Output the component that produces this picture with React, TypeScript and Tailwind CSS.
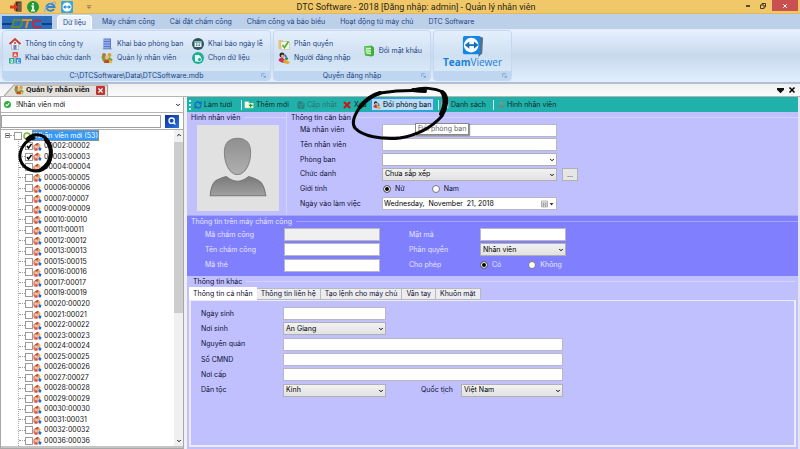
import { useState } from "react"
import type { ReactNode } from "react"
import { ChevronDown, ChevronUp, Search, RefreshCw, Save, X } from "lucide-react"

const employees = [
  "00002", "00003", "00004", "00005", "00006", "00007", "00009", "00010", "00011", "00012",
  "00013", "00015", "00016", "00017", "00019", "00020", "00021", "00022", "00023", "00024",
  "00025", "00026", "00027", "00028", "00029", "00030", "00031", "00032", "00036",
]

const menus = ["Máy chấm công", "Cài đặt chấm công", "Chấm công và báo biểu", "Hoạt động từ máy chủ", "DTC Software"]

const tabs = ["Thông tin cá nhân", "Thông tin liên hệ", "Tạo lệnh cho máy chủ", "Vân tay", "Khuôn mặt"]

/* ---------- icons ---------- */

function PeopleIcon({ className = "size-3" }: { className?: string }) {
  return (
    <svg viewBox="0 0 24 24" className={`shrink-0 ${className}`}>
      <path d="M1 11c0-4 3-6 6-5l4 6-2 9-5-2z" fill="#8a9a3a" />
      <circle cx="6" cy="6" r="4" fill="#b07a3c" />
      <circle cx="17" cy="6" r="4" fill="#d8a23a" />
      <path d="M12 12l5-2 6 5-2 7-7-1z" fill="#6fa33c" />
      <circle cx="12" cy="11" r="4" fill="#e8b98a" />
      <path d="M6 22c0-5 3-7 6-7s5 3 5 7z" fill="#c8452c" />
      <path d="M17 15l6 4-3 4-4-2z" fill="#e3c23c" />
    </svg>
  )
}

function StaffIcon() {
  return (
    <svg viewBox="0 0 24 24" className="size-[9px] shrink-0">
      <path d="M1 9l8-5 4 2-1 16-8 1-3-5z" fill="#e07a5c" />
      <circle cx="8" cy="12" r="4" fill="#f4c4a8" />
      <path d="M5 7l7-5 5 3-3 5-6-1z" fill="#b4503a" />
      <circle cx="16" cy="9" r="4" fill="#eeaa62" />
      <path d="M14 15l4-2 5 4-3 6-5-1z" fill="#2f66c4" />
      <path d="M6 19l5-2 2 5-6 1z" fill="#e2472d" />
    </svg>
  )
}

function HouseIcon() {
  return (
    <svg viewBox="0 0 24 24" className="size-3 shrink-0">
      <path d="M5 11v12h14V11l-7-7z" fill="#e6ecf8" stroke="#8c9bc0" />
      <path d="M1 12L12 2l11 10" fill="none" stroke="#cf3a2c" strokeWidth="3.5" />
      <path d="M9 14h6v9H9z" fill="#6f83b8" />
      <circle cx="12" cy="10" r="2" fill="#cf3a2c" />
    </svg>
  )
}

function BlocksIcon() {
  return (
    <svg viewBox="0 0 24 24" className="size-3 shrink-0">
      <rect x="7" y="0" width="11" height="11" rx="1" fill="#e0564c" />
      <rect x="0" y="12" width="11" height="11" rx="1" fill="#2fae8c" />
      <rect x="13" y="12" width="11" height="11" rx="1" fill="#3d8fd6" />
      <path d="M10 9l2.500-6 2.500 6M11 7h3M4 15v6h3v-6zM21 16h-4v5h4" fill="none" stroke="#fff" strokeWidth="1.500" />
    </svg>
  )
}

function BuildingIcon() {
  return (
    <svg viewBox="0 0 24 24" className="size-3 shrink-0">
      <path d="M5 1h15v21H5z" fill="#5b78d0" />
      <path d="M8 3v17M12 3v17M16 3v17" stroke="#cfdcfb" strokeWidth="2" strokeDasharray="3 2" />
      <path d="M3 22h19" stroke="#8fa0d0" strokeWidth="2" />
    </svg>
  )
}

function CalendarIcon() {
  return (
    <svg viewBox="0 0 24 24" className="size-3 shrink-0">
      <circle cx="12" cy="12" r="12" fill="#2f5260" />
      <rect x="5" y="6" width="14" height="12" rx="1" fill="#e7f0ef" />
      <path d="M5 8h14" stroke="#5fa8a0" strokeWidth="3" />
      <path d="M8 12h8M8 15h8" stroke="#2f5260" strokeWidth="1.500" strokeDasharray="2 1" />
    </svg>
  )
}

function DataIcon() {
  return (
    <svg viewBox="0 0 24 24" className="size-3 shrink-0">
      <circle cx="12" cy="12" r="12" fill="#1fb093" />
      <path d="M6 6h8l4 4v3l-5 6H6z" fill="#f4fbf9" />
      <circle cx="15" cy="15" r="4" fill="#1fb093" stroke="#fff" strokeWidth="1.500" />
    </svg>
  )
}

function PermissionIcon() {
  return (
    <svg viewBox="0 0 24 24" className="size-3 shrink-0">
      <path d="M1 4h8l2 3h11v15H1z" fill="#e3c47a" />
      <path d="M6 7h17v16H6z" fill="#f6f4ea" stroke="#b9b48f" />
      <path d="M9 14l4 5 8-12" fill="none" stroke="#53b234" strokeWidth="3.500" />
    </svg>
  )
}

function UserIcon({ className = "size-3" }: { className?: string }) {
  return (
    <svg viewBox="0 0 24 24" className={`shrink-0 ${className}`}>
      <circle cx="8" cy="6" r="5" fill="#2a2330" />
      <circle cx="9" cy="8" r="3" fill="#e9b48c" />
      <path d="M1 17c1-5 5-6 9-5l4 4-3 6-6-2z" fill="#c8325a" />
      <circle cx="17" cy="13" r="3" fill="#3a8a3c" />
      <path d="M11 16l5 0 8 5-4 3-9-2z" fill="#e3a52c" />
      <path d="M14 4l4 5-4 2z" fill="#4a60c8" />
    </svg>
  )
}

function PasswordIcon() {
  return (
    <svg viewBox="0 0 24 24" className="size-3 shrink-0">
      <path d="M2 3l15-2 5 4v16l-5 2-13-2z" fill="#3fae3c" />
      <path d="M3 4l13-1v17l-11-2z" fill="#6fd062" />
      <path d="M6 8l10-1M6 12l10 0M7 16l9 1" stroke="#fff" strokeWidth="2" />
    </svg>
  )
}

function TeamViewerIcon({ className }: { className: string }) {
  return (
    <svg viewBox="0 0 24 24" className={className}>
      <path d="M18 1l5 2-1 17-4 4z" fill="#5f6b7c" />
      <rect x="1" y="1" width="19" height="20" rx="2" fill="#1486e6" />
      <circle cx="10" cy="11" r="8" fill="#fff" />
      <path d="M3 11l5-4v3h5V7l5 4-5 4v-3H8v3z" fill="#1270c4" />
    </svg>
  )
}

function Launcher() {
  return (
    <svg viewBox="0 0 8 8" className="absolute right-1 size-[5px]">
      <path d="M1 6V1h5M4 4l3 3M7 4v3H4" fill="none" stroke="#6d8fbd" />
    </svg>
  )
}

/* ---------- ribbon ---------- */

function RibbonButton({ icon, children }: { icon: ReactNode; children: string }) {
  return (
    <button className="flex h-[14px] items-center gap-1 whitespace-nowrap text-[#1d4484]">
      {icon}
      <span>{children}</span>
    </button>
  )
}

function RibbonGroup({ caption, className, children }: { caption?: string; className: string; children: ReactNode }) {
  return (
    <section className={`flex flex-col overflow-hidden rounded-sm border border-[#c3d8f0] bg-linear-to-b from-[#e4effc] via-[#cfe0f2] to-[#dcecfc] ${className}`}>
      <div className="flex flex-1 items-center">{children}</div>
      <div className="relative flex h-[9px] items-center justify-center bg-[#bfd6f0] text-[#1d4484]">
        {caption}
        <Launcher />
      </div>
    </section>
  )
}

function Header() {
  return (
    <header className="shrink-0 bg-[#bdd0ea]">
      <div className="relative flex h-[14px] items-center justify-center border-b border-[#dfb95c] bg-[#f0c869]">
        <div className="absolute left-2.5 flex items-center gap-[5px]">
          <svg viewBox="0 0 24 24" className="size-3">
            <path d="M11 1h12v20H11z" fill="#3a2a26" />
            <path d="M15 4l7-2v20l-7-2z" fill="#7c5a48" />
            <path d="M0 9h8V4l8 8-8 8v-5H0z" fill="#e03a1e" />
          </svg>
          <svg viewBox="0 0 24 24" className="size-3">
            <circle cx="12" cy="12" r="12" fill="#1f9a34" />
            <path d="M12 4v3M9 10h3v9M8 19h8" fill="none" stroke="#fff" strokeWidth="3.500" />
          </svg>
          <svg viewBox="0 0 24 24" className="size-3">
            <path d="M20 16a8 7 0 1 1 1-4H5" fill="none" stroke="#2f86d8" strokeWidth="4" />
            <path d="M2 22C-2 18 14 1 22 2c2 1 1 3 0 5" fill="none" stroke="#6fb0e8" strokeWidth="2" />
          </svg>
          <svg viewBox="0 0 24 24" className="size-3">
            <rect width="24" height="24" rx="2" fill="#32a8e8" />
            <circle cx="12" cy="12" r="9" fill="#fff" />
            <path d="M4 12l5-4v3h6V8l5 4-5 4v-3H9v3z" fill="#1c86d0" />
          </svg>
          <svg viewBox="0 0 8 8" className="ml-2 size-1.5">
            <path d="M1 2h6M2 4h4L4 6z" fill="#8c7c50" stroke="#8c7c50" />
          </svg>
        </div>
        <h1 className="ml-8 font-[Roboto,sans-serif] text-[9px] text-[#2c2614]">
          DTC Software - 2018 [Đăng nhập: admin] - Quản lý nhân viên
        </h1>
        <div className="absolute top-0 right-0.5 flex h-[11px] items-center">
          <button aria-label="Thu nhỏ" className="mr-2.5 h-0.5 w-1 bg-[#5c4a20]" />
          <button aria-label="Khôi phục" className="mr-1.5">
            <svg viewBox="0 0 12 12" className="size-1.5">
              <path d="M1 4h7v7H1zM4 4V1h7v7H8" fill="none" stroke="#4a3c1c" strokeWidth="2" />
            </svg>
          </button>
          <button aria-label="Đóng" className="flex h-full w-[26px] items-center justify-center bg-[#c9504f] text-white">
            <X className="size-1.5" strokeWidth={4} />
          </button>
        </div>
      </div>

      <nav className="flex h-[15px] items-end pl-0.5 text-[#1d4484]">
        <svg viewBox="0 0 50 13" className="mr-[5px] h-[13px] w-[50px]">
          <rect width="50" height="13" fill="#2c6cb8" />
          <path d="M0 8h10M40 8h10" stroke="#0c3f86" strokeWidth="2" />
          <path d="M10 11l2-7h5q4 0 3 4t-5 3z" fill="none" stroke="#5c8c3c" strokeWidth="2" />
          <path d="M20 4h10M26 4l-2 8" stroke="#e09028" strokeWidth="2" />
          <path d="M39 5q-8-2-8 3t8 3" fill="none" stroke="#b83040" strokeWidth="2" />
        </svg>
        <button className="h-[14px] rounded-t-sm border border-b-0 border-white bg-[#e9f2fd] px-[5px]">Dữ liệu</button>
        <div className="ml-2.5 flex h-[14px] items-center gap-[15px] whitespace-nowrap">
          {menus.map((m) => (
            <button key={m}>{m}</button>
          ))}
        </div>
      </nav>

      <div className="flex h-[53px] gap-0.5 border-y border-[#dfeafa] bg-linear-to-b from-[#e7f1ff] via-[#c8d8ec] to-[#e0eefe] px-0.5">
        <RibbonGroup caption={"C:\\DTCSoftware\\Data\\DTCSoftware.mdb"} className="w-[269px]">
          <div className="grid grid-cols-[92px_91px_auto] pl-1.5">
            <RibbonButton icon={<HouseIcon />}>Thông tin công ty</RibbonButton>
            <RibbonButton icon={<BuildingIcon />}>Khai báo phòng ban</RibbonButton>
            <RibbonButton icon={<CalendarIcon />}>Khai báo ngày lễ</RibbonButton>
            <RibbonButton icon={<BlocksIcon />}>Khai báo chức danh</RibbonButton>
            <RibbonButton icon={<PeopleIcon />}>Quản lý nhân viên</RibbonButton>
            <RibbonButton icon={<DataIcon />}>Chọn dữ liệu</RibbonButton>
          </div>
        </RibbonGroup>
        <RibbonGroup caption="Quyền đăng nhập" className="w-[158px]">
          <div className="flex items-center gap-3 pl-1">
            <div>
              <RibbonButton icon={<PermissionIcon />}>Phân quyền</RibbonButton>
              <RibbonButton icon={<UserIcon />}>Người đăng nhập</RibbonButton>
            </div>
            <RibbonButton icon={<PasswordIcon />}>Đổi mật khẩu</RibbonButton>
          </div>
        </RibbonGroup>
        <RibbonGroup className="w-[79px]">
          <button className="flex w-full flex-col items-center text-[#1a80d8]">
            <TeamViewerIcon className="size-[22px]" />
            <span className="font-['Open_Sans',sans-serif] text-[10px]">
              <b>Team</b>Viewer
            </span>
          </button>
        </RibbonGroup>
      </div>
      <div className="h-0.5 bg-[#aebfd8]" />
    </header>
  )
}

function DocumentTabs() {
  return (
    <div className="flex h-[13px] shrink-0 items-end justify-between border-b border-[#b4b4b4] bg-linear-to-b from-[#f0f0f0] to-[#fbfbfb] pr-1">
      <div className="relative ml-1 flex h-3 items-center gap-0.5 pr-1 pl-2.5">
        <svg viewBox="0 0 104 12" preserveAspectRatio="none" className="absolute inset-0 size-full">
          <path d="M0 12L10 1h93v11" fill="#e3e0dc" stroke="#a09c98" />
        </svg>
        <PeopleIcon className="relative size-2.5" />
        <b className="relative font-[Roboto,sans-serif] text-[8px] whitespace-nowrap text-[#222]">Quản lý nhân viên</b>
        <button aria-label="Đóng thẻ" className="relative ml-1 flex size-[9px] items-center justify-center rounded-[1px] bg-[#c03434] text-white">
          <X className="size-[7px]" strokeWidth={4} />
        </button>
      </div>
      <div className="flex h-full items-center gap-1">
        <button aria-label="Danh sách thẻ">
          <svg viewBox="0 0 8 8" className="size-[7px]">
            <path d="M0 1h8v2L4 7 0 3z" fill="#111" />
          </svg>
        </button>
        <button aria-label="Đóng">
          <X className="size-2 text-black" strokeWidth={5} />
        </button>
      </div>
    </div>
  )
}

/* ---------- left tree ---------- */

function Tick({ label, defaultChecked = false }: { label: string; defaultChecked?: boolean }) {
  const [on, setOn] = useState(defaultChecked)
  return (
    <span className="relative flex size-2 shrink-0">
      <input
        type="checkbox"
        aria-label={label}
        checked={on}
        onChange={() => setOn(!on)}
        className="size-2 appearance-none border border-[#9a9a9a] bg-white"
      />
      {on && (
        <svg viewBox="0 0 8 8" className="pointer-events-none absolute inset-0 size-2">
          <path d="M2 4l1.500 2L6.500 2" fill="none" stroke="#000" strokeWidth="1.500" />
        </svg>
      )}
    </span>
  )
}

function Sidebar() {
  return (
    <aside className="flex w-[184px] shrink-0 flex-col border border-t-0 border-[#a8a8a8] bg-white text-[#111]">
      <div className="relative flex h-4 shrink-0 items-center border-b border-[#b4b4b4] pl-[3px]">
        <svg viewBox="0 0 16 16" className="size-[7px]">
          <circle cx="8" cy="8" r="8" fill="#2fae3c" />
          <path d="M4 8l3 3 5-6" fill="none" stroke="#fff" strokeWidth="2.500" />
        </svg>
        <select aria-label="Phòng ban" className="flex-1 appearance-none pl-[5px] outline-none">
          <option>!Nhân viên mới</option>
        </select>
        <ChevronDown className="pointer-events-none absolute right-0.5 size-1.5" strokeWidth={4} />
      </div>
      <div className="flex h-4 shrink-0 items-center gap-1 pr-1">
        <input aria-label="Tìm kiếm" className="h-[13px] min-w-0 flex-1 border border-[#a0a0a0] bg-white px-1" />
        <button aria-label="Tìm" className="flex h-[13px] w-[14px] items-center justify-center bg-linear-to-br from-[#0c2c9c] to-[#2c74e0] text-white">
          <Search className="size-2" strokeWidth={4} />
        </button>
      </div>
      <div className="flex min-h-0 flex-1 border-t border-[#b0b0b0]">
        <div className="flex flex-1 flex-col pl-1">
          <div className="flex flex-1 items-center">
            <button aria-label="Thu gọn" className="flex size-[5px] items-center justify-center border border-[#9a9a9a]">
              <span className="h-px w-[3px] bg-[#444]" />
            </button>
            <span className="w-1 border-t border-dotted border-[#999]" />
            <Tick label="!Nhân viên mới" />
            <svg viewBox="0 0 16 16" className="mx-px size-2">
              <circle cx="8" cy="8" r="6" fill="#f4fbea" stroke="#7cb83c" strokeWidth="3" />
            </svg>
            <span className="border border-dotted border-[#c88a3c] bg-[#3399ff] leading-[9px] text-white">!Nhân viên mới (53)</span>
          </div>
          <ul className="ml-[13px] flex flex-[29] flex-col border-l border-dotted border-[#aaa]">
            {employees.map((id, i) => (
              <li key={id} className="flex flex-1 items-center">
                <span className="w-[6px] border-t border-dotted border-[#999]" />
                <Tick label={id} defaultChecked={i < 2} />
                <StaffIcon />
                <span className="ml-0.5">
                  {id}:{id}
                </span>
              </li>
            ))}
          </ul>
        </div>
        <div className="flex w-[9px] flex-col items-center justify-between bg-[#f0f0f0] py-0.5">
          <ChevronUp className="size-1.5" strokeWidth={4} />
          <span className="mt-1 mb-auto h-[171px] w-full bg-[#cdcdcd]" />
          <ChevronDown className="size-1.5" strokeWidth={4} />
        </div>
      </div>
      <div className="h-0.5 shrink-0 bg-[#c4c4c4]" />
    </aside>
  )
}

/* ---------- form parts ---------- */

function TextBox({ id, className = "" }: { id: string; className?: string }) {
  return <input id={id} className={`h-[13px] border border-[#b8b8c4] bg-white px-1 text-black outline-none ${className}`} />
}

function Select({ id, value, className = "", plain = false }: { id: string; value: string; className?: string; plain?: boolean }) {
  return (
    <span className={`relative flex ${className}`}>
      <select
        id={id}
        className={`h-[13px] w-full appearance-none border border-[#b0b0b0] pl-0.5 text-black outline-none ${plain ? "bg-white" : "bg-linear-to-b from-[#f2f2f2] to-[#e2e2e2]"}`}
      >
        <option>{value}</option>
      </select>
      <ChevronDown className="pointer-events-none absolute top-1 right-0.5 size-1.5 text-black" strokeWidth={4} />
    </span>
  )
}

function Radio({ name, label, defaultChecked = false }: { name: string; label: string; defaultChecked?: boolean }) {
  return (
    <label className="flex items-center gap-1">
      <input
        type="radio"
        name={name}
        defaultChecked={defaultChecked}
        className="size-2 appearance-none rounded-full border border-[#777] bg-white checked:bg-black checked:shadow-[inset_0_0_0_1px_white]"
      />
      {label}
    </label>
  )
}

function Legend({ children }: { children: string }) {
  return (
    <div className="flex h-[11px] shrink-0 items-center gap-1 pl-1 whitespace-nowrap">
      <h2>{children}</h2>
      <span className="h-px flex-1 bg-white/30" />
    </div>
  )
}

function Toolbar() {
  return (
    <div className="flex h-[15px] shrink-0 items-center bg-[#20b2aa] whitespace-nowrap text-[#10282c]">
      <span className="mx-0.5 h-2.5 border-l-2 border-dotted border-[#c8f0ec]" />
      <button className="flex w-[48px] items-center gap-0.5 pl-px">
        <RefreshCw className="size-2 text-[#1c6cc8]" strokeWidth={4} />
        Làm tươi
      </button>
      <button className="flex w-[54px] items-center gap-0.5 border-l border-[#c8f0ec] pl-0.5">
        <svg viewBox="0 0 24 20" className="h-2 w-2.5">
          <path d="M1 1h11v17H1z" fill="#f4faf4" stroke="#6c8c9c" />
          <path d="M10 5h13v13H10z" fill="#e8f0c8" />
          <path d="M16 7v9M12 11h9" stroke="#2c9c2c" strokeWidth="3" />
        </svg>
        Thêm mới
      </button>
      <button disabled className="flex w-[47px] items-center gap-0.5 pl-0.5 text-[#32706e]">
        <Save className="size-2" strokeWidth={3} />
        Cập nhật
      </button>
      <button className="flex w-[29px] items-center gap-0.5">
        <X className="size-2.5 text-[#c01c1c]" strokeWidth={5} />
        Xóa
      </button>
      <button className="flex h-[13px] w-[63px] items-center gap-0.5 border border-[#3399ff] bg-[#b9dcf8] pl-px text-black">
        <UserIcon className="size-2" />
        Đổi phòng ban
      </button>
      <button className="ml-1 flex w-[55px] items-center gap-0.5 border-l border-[#c8f0ec] pl-0.5">
        <svg viewBox="0 0 16 16" className="size-2">
          <path d="M1 1h14v14H1z" fill="#e8f0fa" stroke="#5c8cc8" />
          <path d="M1 3h14" stroke="#d86c3c" strokeWidth="3" />
        </svg>
        Danh sách
      </button>
      <button className="flex items-center gap-0.5 border-l border-[#c8f0ec] pl-1">
        <svg viewBox="0 0 16 16" className="size-[7px]">
          <circle cx="8" cy="5" r="4" fill="#8a8f8f" />
          <path d="M1 15c0-6 14-6 14 0z" fill="#7a8080" />
        </svg>
        Hình nhân viên
      </button>
    </div>
  )
}

function BasicInfo() {
  return (
    <section className="flex h-[103px] shrink-0 bg-[#c0c0ff]">
      <div className="flex w-[100px] shrink-0 flex-col border-r border-white/30">
        <Legend>Hình nhân viên</Legend>
        <svg viewBox="0 0 81 85" className="mt-0.5 ml-2.5 h-[86px] w-[82px]">
          <defs>
            <linearGradient id="head" x1="0" y1="0" x2="0" y2="1">
              <stop offset="0" stopColor="#8f8f8f" />
              <stop offset="1" stopColor="#b0b0b0" />
            </linearGradient>
            <linearGradient id="body" x1="0" y1="0" x2="0" y2="1">
              <stop offset="0" stopColor="#7a7a7a" />
              <stop offset="1" stopColor="#a0a0a0" />
            </linearGradient>
          </defs>
          <rect width="81" height="85" fill="#e1e1e1" />
          <path d="M13 70c1-14 5-16 16-19q11 9 22 0c11 3 15 5 17 19z" fill="url(#body)" stroke="#777" />
          <path d="M40 13c9 0 13 6 13 14 0 12-6 22-13 22s-13-10-13-22c0-8 4-14 13-14z" fill="url(#head)" stroke="#858585" />
        </svg>
      </div>
      <div className="flex flex-1 flex-col">
        <Legend>Thông tin căn bản</Legend>
        <div className="grid h-[88px] grid-cols-[82px_175px_auto] grid-rows-6 items-center justify-start pl-[13px]">
          <label htmlFor="code">Mã nhân viên</label>
          <TextBox id="code" />
          <span />
          <label htmlFor="name">Tên nhân viên</label>
          <TextBox id="name" />
          <span />
          <label htmlFor="dept">Phòng ban</label>
          <Select id="dept" value="" plain />
          <span />
          <label htmlFor="title">Chức danh</label>
          <Select id="title" value="Chưa sắp xếp" />
          <button className="ml-[5px] h-[13px] w-4 border border-[#b0b0b0] bg-[#e6e6e6] leading-[9px] text-[#333]">...</button>
          <span>Giới tính</span>
          <div className="flex items-center gap-[27px] pl-px">
            <Radio name="sex" label="Nữ" defaultChecked />
            <Radio name="sex" label="Nam" />
          </div>
          <span />
          <label htmlFor="start">Ngày vào làm việc</label>
          <span className="relative flex items-center">
            <input id="start" defaultValue="Wednesday,  November  21, 2018" className="h-[13px] w-full border border-[#b8b8c4] bg-white pl-px whitespace-pre text-black outline-none" />
            <svg viewBox="0 0 26 16" className="pointer-events-none absolute right-[3px] h-2 w-[13px]">
              <path d="M1 2h12v12H1zM1 6h12M5 6v8M9 6v8M1 10h12" fill="#eee" stroke="#777" />
              <path d="M17 6h8l-4 5z" fill="#333" />
            </svg>
          </span>
        </div>
      </div>
    </section>
  )
}

function DeviceInfo() {
  return (
    <section className="flex h-[61px] shrink-0 flex-col border-t border-[#a8a8f0] bg-[#8080ff] text-[#e4e4fc]">
      <Legend>Thông tin trên máy chấm công</Legend>
      <div className="grid h-[46px] grid-cols-[79px_96px_29px_71px_auto] grid-rows-3 items-center justify-start pl-[18px]">
        <label htmlFor="dev-code">Mã chấm công</label>
        <input id="dev-code" disabled className="h-[13px] w-full border border-[#b8b8c4] bg-[#f0f0f0]" />
        <span />
        <label htmlFor="pin">Mật mã</label>
        <TextBox id="pin" className="w-[86px]" />
        <label htmlFor="dev-name">Tên chấm công</label>
        <TextBox id="dev-name" className="w-full" />
        <span />
        <label htmlFor="role">Phân quyền</label>
        <Select id="role" value="Nhân viên" className="w-[86px]" />
        <label htmlFor="card">Mã thẻ</label>
        <TextBox id="card" className="w-full" />
        <span />
        <span>Cho phép</span>
        <div className="flex gap-[27px]">
          <Radio name="allow" label="Có" defaultChecked />
          <Radio name="allow" label="Không" />
        </div>
      </div>
    </section>
  )
}

function OtherInfo() {
  const [tab, setTab] = useState(tabs[0])
  return (
    <section className="flex min-h-0 flex-1 flex-col bg-[#c0c0ff] px-0.5 pb-0.5">
      <Legend>Thông tin khác</Legend>
      <div role="tablist" className="flex h-[13px] shrink-0 items-end whitespace-nowrap">
        {tabs.map((t) => (
          <button
            key={t}
            role="tab"
            aria-selected={t === tab}
            onClick={() => setTab(t)}
            className={t === tab ? "h-[13px] border border-b-0 border-white bg-white px-[3px]" : "h-3 border border-l-0 border-[#b8b8c0] bg-[#ededf0] px-1"}
          >
            {t}
          </button>
        ))}
      </div>
      <div role="tabpanel" className="flex-1 border-2 border-t border-[#ececf8] bg-[#c0c0ff] pt-[5px] pl-2.5">
        <div className="grid h-[92px] grid-cols-[82px_103px_35px_40px_102px] grid-rows-6 items-center justify-start">
          <label htmlFor="birth">Ngày sinh</label>
          <TextBox id="birth" />
          <span className="col-span-3" />
          <label htmlFor="place">Nơi sinh</label>
          <Select id="place" value="An Giang" />
          <span className="col-span-3" />
          <label htmlFor="home">Nguyên quán</label>
          <TextBox id="home" className="col-span-4" />
          <label htmlFor="idno">Số CMND</label>
          <TextBox id="idno" className="col-span-4" />
          <label htmlFor="issued">Nơi cấp</label>
          <TextBox id="issued" className="col-span-4" />
          <label htmlFor="ethnic">Dân tộc</label>
          <Select id="ethnic" value="Kinh" />
          <span />
          <label htmlFor="nation">Quốc tịch</label>
          <Select id="nation" value="Việt Nam" />
        </div>
      </div>
    </section>
  )
}

export default function App() {
  return (
    <div className="relative flex h-screen flex-col overflow-hidden bg-[#f0f0f0] font-[Inter,'Liberation_Sans',sans-serif] text-[7px] leading-[10px] text-[#101030]">
      <Header />
      <DocumentTabs />
      <div className="flex min-h-0 flex-1">
        <Sidebar />
        <main className="flex min-w-0 flex-1 flex-col border-r-2 border-[#e4e4f0] pl-[3px]">
          <Toolbar />
          <BasicInfo />
          <DeviceInfo />
          <OtherInfo />
        </main>
      </div>

      {/* tooltip of the hovered toolbar button */}
      <div className="absolute top-[123px] left-[415px] border border-[#888] bg-white px-0.5 text-[#666] shadow-[1px_1px_1px_#0006]">Đổi phòng ban</div>

      {/* pen marks */}
      <svg viewBox="0 0 460 180" className="pointer-events-none absolute top-0 left-0 h-[180px] w-[460px]" fill="none" stroke="#050505" strokeLinecap="round">
        <path d="M34 138c-9 2-15 12-14 20 1 8 9 13 16 13 10 0 15-9 15-17 0-10-4-18-12-19-5-1-9 1-12 4" strokeWidth="3" />
        <path d="M46 140c7 7 7 22-4 29" strokeWidth="4" />
        <path d="M424 91c-14-1-30 0-44 2-10 3-18 9-22 17-5 8-6 14-3 18 7 8 27 12 45 10 18-3 33-12 42-22 5-8 7-19 1-24-8-4-20-5-30-2" strokeWidth="3" />
        <path d="M380 93c-8 2-15 8-20 14M413 90l12 1M442 92c4 6 3 15-1 22" strokeWidth="4" />
      </svg>
    </div>
  )
}
